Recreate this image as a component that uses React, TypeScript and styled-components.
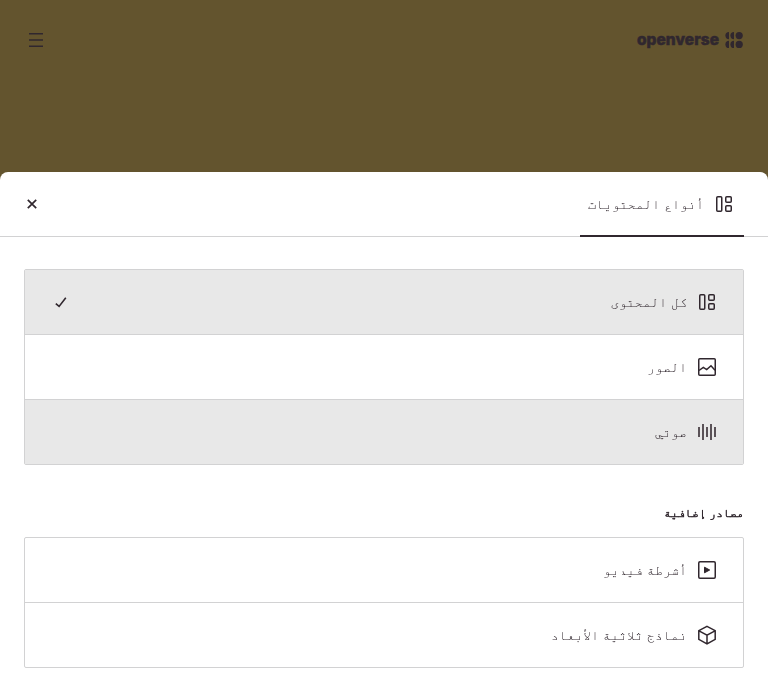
import React from 'react';
import styled, { createGlobalStyle, css } from 'styled-components';

const ink = '#30272e';
const line = '#d2d2d3';

const GlobalStyle = createGlobalStyle`
  *, *::before, *::after { box-sizing: border-box; }
  body { margin: 0; background: #63542e; }
`;

const Page = styled.div`
  direction: rtl;
  height: 700px;
  display: flex;
  flex-direction: column;
  overflow: hidden;
  background: #63542e;
  color: ${ink};
  font-family: Inter, FreeMono, 'DejaVu Sans Mono', monospace;
`;

const Header = styled.header`
  height: 80px;
  flex: none;
  margin-bottom: 92px;
  padding: 0 25px 0 24px;
  display: flex;
  align-items: center;
  justify-content: space-between;
`;

const Brand = styled.div`
  display: flex;
  align-items: center;
  gap: 6px;
  svg { display: block; }
`;

const Wordmark = styled.span`
  direction: ltr;
  font: 800 15.5px/20px Inter, sans-serif;
  letter-spacing: 0.05px;
  -webkit-text-stroke: 0.5px ${ink};
`;

const IconButton = styled.button`
  display: flex;
  padding: 0;
  border: 0;
  background: none;
  color: inherit;
`;

const Sheet = styled.main`
  flex: 1;
  background: #fff;
  border-radius: 8px 8px 0 0;
  will-change: transform;
`;

const Tabs = styled.div`
  height: 65px;
  padding: 0 24px 0 20px;
  display: flex;
  align-items: center;
  justify-content: space-between;
  border-bottom: 1px solid ${line};
`;

const Tab = styled.div`
  width: 164px;
  height: 65px;
  margin-bottom: -1px;
  padding-right: 8px;
  display: flex;
  align-items: center;
  gap: 8px;
  border-bottom: 2px solid ${ink};
`;

const Label = styled.span`
  font-size: 13.33px;
  line-height: 20px;
  word-spacing: 0.3px;
  white-space: nowrap;
`;

const Content = styled.div`
  padding: 32px 24px 0;
`;

const List = styled.ul`
  margin: 0;
  padding: 0;
  list-style: none;
  border: 1px solid ${line};
  border-radius: 2px;
`;

const Item = styled.li<{ $shaded?: boolean }>`
  height: 65px;
  padding: 0 24px;
  display: flex;
  align-items: center;
  gap: 8px;
  border-bottom: 1px solid ${line};
  ${p => p.$shaded && css`background: #e8e8e8;`}
  &:last-child { height: 64px; border-bottom: 0; }
`;

const Check = styled.span`
  display: flex;
  margin-right: auto;
`;

const Heading = styled.h2`
  margin: 38px 0 14px;
  font-size: 11.6px;
  font-weight: 400;
  line-height: 20px;
  -webkit-text-stroke: 0.6px ${ink};
`;

const Glyph = styled.svg`
  display: block;
  flex: none;
  fill: none;
  stroke: ${ink};
  stroke-width: 1.5;
`;

type IconName = 'all' | 'image' | 'audio' | 'video' | 'model' | 'close' | 'check' | 'menu';

const shapes: Record<IconName, React.ReactNode> = {
  all: <>
    <rect x="4.75" y="4.75" width="5" height="14.5" rx="1" />
    <rect x="13.75" y="4.75" width="5.5" height="5.5" rx="1" />
    <rect x="13.75" y="13.75" width="5.5" height="5.5" rx="1" />
  </>,
  image: <>
    <rect x="3.75" y="3.75" width="16.5" height="16.5" rx="1" />
    <path d="M4 15.5 8.3 12.3 11.7 14.6 16 10.8 20 15.2" />
  </>,
  audio: <path d="M4 7v10M8 4v16M12 7v10M16 4v16M20 7v10" strokeWidth="2" stroke="#5a5257" />,
  video: <>
    <rect x="3.75" y="3.75" width="16.5" height="16.5" rx="1.2" />
    <path d="m9.5 9.2 5.2 2.8-5.2 2.8Z" fill={ink} strokeWidth="1" />
  </>,
  model: <path d="m12 3.3 8.2 4.4v8.6L12 20.8l-8.2-4.5V7.7ZM4 7.8l8 4.4 8-4.4M12 12.2v8.3" />,
  close: <path d="m7.8 7.8 8.4 8.4m0-8.4-8.4 8.4" strokeWidth="1.7" />,
  check: <path d="m6.8 13.6 3.3 2.8 6.7-8.7" strokeWidth="1.6" />,
  menu: <path d="M5 5.8h14M5 12h14M5 18.2h14" strokeWidth="1.6" />,
};

const Icon = ({ name }: { name: IconName }) => (
  <Glyph width="24" height="24" viewBox="0 0 24 24" aria-hidden="true">{shapes[name]}</Glyph>
);

const LogoMark = () => (
  <svg width="18" height="16" viewBox="0 0 18 16" fill={ink} aria-hidden="true">
    {[3.6, 12.4].map(y => (
      <g key={y}>
        <path d={`M4 ${y - 3.6}a3.6 3.6 0 0 0 0 7.2Z`} />
        <path d={`M9 ${y - 3.6}a3.6 3.6 0 0 0 0 7.2Z`} />
        <circle cx="14.2" cy={y} r="3.6" />
      </g>
    ))}
  </svg>
);

export default function App() {
  return (
    <>
      <GlobalStyle />
      <Page lang="ar">
        <Header>
          <Brand><LogoMark /><Wordmark>openverse</Wordmark></Brand>
          <IconButton aria-label="القائمة"><Icon name="menu" /></IconButton>
        </Header>
        <Sheet>
          <Tabs>
            <Tab><Icon name="all" /><Label>أنواع المحتويات</Label></Tab>
            <IconButton aria-label="إغلاق"><Icon name="close" /></IconButton>
          </Tabs>
          <Content>
            <List>
              <Item $shaded>
                <Icon name="all" /><Label>كل المحتوى</Label>
                <Check><Icon name="check" /></Check>
              </Item>
              <Item><Icon name="image" /><Label>الصور</Label></Item>
              <Item $shaded><Icon name="audio" /><Label>صوتي</Label></Item>
            </List>
            <Heading>مصادر إضافية</Heading>
            <List>
              <Item><Icon name="video" /><Label>أشرطة فيديو</Label></Item>
              <Item><Icon name="model" /><Label>نماذج ثلاثية الأبعاد</Label></Item>
            </List>
          </Content>
        </Sheet>
      </Page>
    </>
  );
}
